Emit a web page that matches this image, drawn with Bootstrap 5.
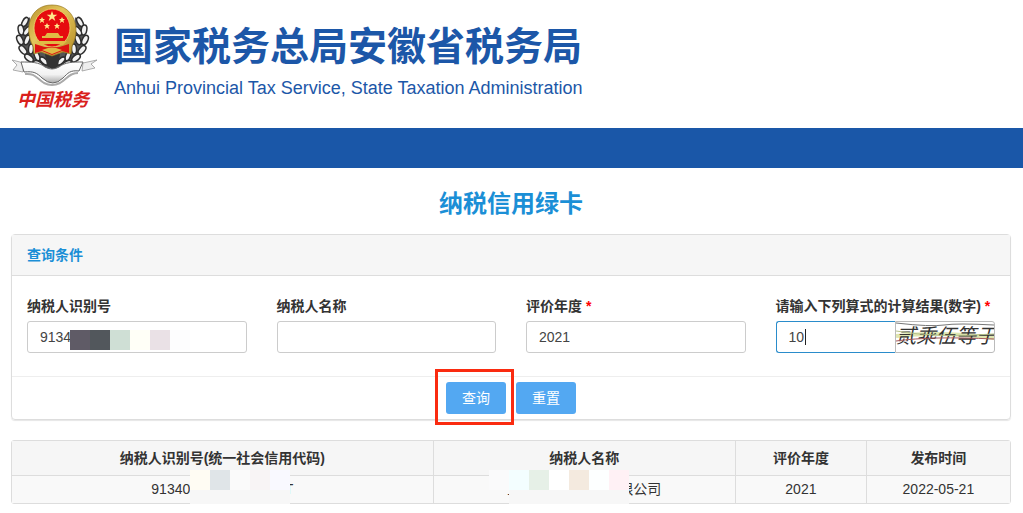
<!DOCTYPE html>
<html lang="zh-CN">
<head>
<meta charset="utf-8">
<meta name="viewport" content="width=device-width, initial-scale=1">
<title>纳税信用绿卡</title>
<link href="https://cdn.jsdelivr.net/npm/bootstrap@5.3.0/dist/css/bootstrap.min.css" rel="stylesheet">
<style>
body{font:14px/20px "Liberation Sans","Noto Sans CJK SC",sans-serif;color:#333;background:#fff}
.site-head{height:128px;color:#1c57a8}
.emblem{width:104px;height:116px}
.org-name{font-size:39px;line-height:48px;font-weight:700;white-space:nowrap}
.org-en{font-size:18px;line-height:26px;white-space:nowrap}
.head-text{padding:23px 0 0 10px}
.blue-bar{height:40px;background:#1a57a8}
.page-title{font-size:24px;line-height:32px;font-weight:700;color:#1b8fd6;margin-bottom:14px}
.main-area{padding:20px 12px 0 11px}
.query-card{border:1px solid #ddd;border-radius:4px;box-shadow:0 1px 1px rgba(0,0,0,.1)}
.query-head{background:#f6f6f6;border-bottom:1px solid #ddd;padding:10px 15px;color:#1b8fd6;font-weight:700}
.query-col{padding:20px 15px 23px}
.query-col label{font-weight:700;margin-bottom:5px;white-space:nowrap;display:block}
.query-col .form-control{height:32px;font-size:14px;line-height:20px;padding:5px 12px;border:1px solid #ccc;border-radius:3px;color:#444}
.query-col .active-box{border-color:#2a8ccb;border-radius:3px 0 0 3px;border-right:0}
.req{color:#f00}
.caret{left:29px;top:8px;width:1px;height:16px;background:#222}
.captcha{width:100px;height:32px;border:1px solid #bbb;border-radius:0 3px 3px 0}
.query-foot{border-top:1px solid #eee;padding:5px 0;gap:10px}
.btn-act{width:60px;height:32px;padding:0;font-size:14px;line-height:20px;color:#fff;background:#53a8f2;border:0;border-radius:3px}
.marked::after{content:"";position:absolute;inset:-13px -8px -11px -11px;border:3px solid #fa2b10;pointer-events:none}
.tile{width:20px;height:20px}
.over{position:absolute;display:flex}
.over-input{left:43px;top:9px}
.result-box{margin-top:20px;border:1px solid #ddd;border-radius:3px}
.result-box table{table-layout:fixed;width:100%;margin:0;text-align:center;background:#f9f9f9}
.result-box th{height:34px;padding:0;background:#f6f6f6;border-bottom:1px solid #ddd;text-align:center}
.result-box td{height:28px;padding:0}
.result-box th+th,.result-box td+td{border-left:1px solid #ddd}
.masked{position:relative;display:inline-block;text-align:left}
.mask-code{width:142px}.mask-name{width:154px}
.over-code{left:39px;top:-9px;width:100px;height:40px;background:#f7f7f7}
.over-name{left:-18px;top:-9px}
.over-name::after{content:"";position:absolute;left:20px;top:20px;right:0;height:20px;background:#f7f7f7}
</style>
</head>
<body>
<header class="site-head d-flex">
<svg class="emblem flex-shrink-0" viewBox="0 0 104 116" role="img" aria-label="中国税务">
<defs><linearGradient id="silver" x2="0" y2="1"><stop stop-color="#fff"/><stop offset=".6" stop-color="#f2f2f2"/><stop offset="1" stop-color="#aaa"/></linearGradient>
<linearGradient id="gold" x2="1" y2="1"><stop stop-color="#b8902c"/><stop offset=".4" stop-color="#e3c75c"/><stop offset="1" stop-color="#b58b24"/></linearGradient>
<g id="ear" fill="#f2f2f2" stroke="#2e2e2e" stroke-width="1.5">
<path d="M30 17C16 30 14 52 36 66l14 4-2-18-16-8z" fill="#555" stroke="none"/>
<ellipse cx="25" cy="22" rx="2.500" ry="5" transform="rotate(30 25 22)"/><ellipse cx="21" cy="30" rx="2.800" ry="5" transform="rotate(-10 21 30)"/><ellipse cx="27" cy="31" rx="2.500" ry="5" transform="rotate(35 27 31)"/><ellipse cx="20" cy="40" rx="2.800" ry="5" transform="rotate(-25 20 40)"/><ellipse cx="27" cy="40" rx="2.500" ry="5" transform="rotate(20 27 40)"/><ellipse cx="23" cy="50" rx="2.800" ry="5" transform="rotate(-40 23 50)"/><ellipse cx="31" cy="49" rx="2.500" ry="5" transform="rotate(5 31 49)"/><ellipse cx="29" cy="58" rx="2.800" ry="5" transform="rotate(-50 29 58)"/><ellipse cx="37" cy="56" rx="2.500" ry="5" transform="rotate(-20 37 56)"/><ellipse cx="38" cy="64" rx="2.800" ry="5" transform="rotate(-65 38 64)"/><ellipse cx="44" cy="61" rx="2.500" ry="5" transform="rotate(-45 44 61)"/></g></defs>
<use href="#ear"/><use href="#ear" transform="matrix(-1 0 0 1 105 0)"/>
<path d="M45 54h15l-2 12-5 4-6-4z" fill="#333"/>
<path d="M33 46C24 30 29 5 52 5s29 25 20 41l-1 8-8-2-11 4-11-4-7 2z" fill="url(#gold)" stroke="#97771e" stroke-width=".7"/>
<ellipse cx="52" cy="28" rx="18" ry="19" fill="#e60b0f" stroke="#eed66b" stroke-width=".8"/>
<path d="M35 44q17 7 34 0v9l-7-2-10 4-10-4-7 2z" fill="#dc1411"/>
<path d="M45 36l2-3h11l2 3h3v2H42v-2zM37 41h30l-4 4-6-1h-9l-7 1zM42 50l6-2h8l6 2-10 4z" fill="#e0bb45"/>
<path d="M52 11l1.300 3.700h4l-3.200 2.400 1.200 3.900-3.300-2.400-3.300 2.400 1.200-3.900-3.200-2.400h4z" fill="#ffe98a"/>
<g fill="#ffe98a"><path d="M42 17l1 2h2l-1.600 1.500.6 2.500-2-1.500-2 1.500.6-2.500L39 19h2zM62 17l1 2h2l-1.600 1.500.6 2.500-2-1.500-2 1.500.6-2.500L59 19h2zM47 23l1 2h2l-1.600 1.500.6 2.500-2-1.500-2 1.500.6-2.500L44 25h2zM57 23l1 2h2l-1.600 1.500.6 2.500-2-1.500-2 1.500.6-2.500L54 25h2z"/></g>
<path d="M12 60l12 3-1 9-10-2 4-5zM97 60l-14 3-1 8 13-3-4-4z" fill="#eee" stroke="#999" stroke-width=".8"/>
<path d="M21 62c10 0 18 0 24 5q7 4 14 0c6-5 14-5 24-5l-4 9c-9-1-11 2-16 7q-10 10-21 0c-5-5-8-7-18-6z" fill="url(#silver)" stroke="#666"/>
<path d="M25 74c10-1 11 4 19 9q8 4 16 0c7-4 9-10 18-10" fill="none" stroke="#aaa" stroke-width="2"/>
<text x="17" y="106" font-size="18" font-weight="700" font-style="italic" fill="#d9201c" font-family="Noto Sans CJK SC, sans-serif">中国税务</text>
</svg>
<div class="head-text">
<div class="org-name">国家税务总局安徽省税务局</div>
<div class="org-en mt-1">Anhui Provincial Tax Service, State Taxation Administration</div>
</div>
</header>
<div class="blue-bar"></div>
<main class="main-area">
<h1 class="page-title text-center">纳税信用绿卡</h1>
<form class="query-card" onsubmit="return false">
<div class="query-head">查询条件</div>
<div class="row g-0">
<div class="col-3 query-col"><label for="code">纳税人识别号</label><div class="position-relative"><input id="code" class="form-control" value="9134"><div class="over over-input"><i class="tile" style="background:#5f5b66"></i><i class="tile" style="background:#52575c"></i><i class="tile" style="background:#cfdfd5"></i><i class="tile" style="background:#fffff7"></i><i class="tile" style="background:#eae1e6"></i><i class="tile" style="background:#fdfdfe"></i></div></div></div>
<div class="col-3 query-col"><label for="tname">纳税人名称</label><input id="tname" class="form-control"></div>
<div class="col-3 query-col"><label for="year">评价年度 <span class="req">*</span></label><input id="year" class="form-control" value="2021"></div>
<div class="col-3 query-col"><label for="answer">请输入下列算式的计算结果(数字) <span class="req">*</span></label>
<div class="d-flex position-relative"><input id="answer" class="form-control active-box" value="10"><span class="caret position-absolute"></span>
<svg class="captcha flex-shrink-0" viewBox="0 0 98 30" role="img" aria-label="贰乘伍等于"><path d="M0 14q45-5 98 2" fill="none" stroke="#dfe6b0" stroke-width="4"/><text x="0" y="21" font-size="20" font-style="italic" fill="#333" font-family="Noto Sans CJK SC, sans-serif">贰乘伍等于</text><path d="M0 1q35 4 48 2t50 0" fill="none" stroke="#777"/><path d="M0 19q35-5 98-2" fill="none" stroke="#a4575b"/><path d="M0 9q40 7 98 3" fill="none" stroke="#b5c08a"/></svg></div></div>
</div>
<div class="query-foot d-flex justify-content-center"><span class="marked position-relative d-flex"><button class="btn btn-act" type="submit">查询</button></span><button class="btn btn-act" type="reset">重置</button></div>
</form>
<div class="result-box">
<table>
<colgroup><col style="width:42.2%"><col style="width:30.3%"><col style="width:13.1%"><col style="width:14.4%"></colgroup>
<thead><tr><th>纳税人识别号(统一社会信用代码)</th><th>纳税人名称</th><th>评价年度</th><th>发布时间</th></tr></thead>
<tbody><tr>
<td><div class="masked mask-code d-inline-flex justify-content-between"><span>91340</span><span>T</span><div class="over over-code"><i class="tile" style="background:#fffcf3"></i><i class="tile" style="background:#e0e5e8"></i><i class="tile" style="background:#fafafa"></i><i class="tile" style="background:#f8f4f5"></i><i class="tile" style="background:#f9f9ff"></i></div></div></td>
<td><div class="masked mask-name d-inline-flex justify-content-between"><span>上</span><span>限公司</span><div class="over over-name"><i class="tile" style="background:#fafafb"></i><i class="tile" style="background:#f3feff"></i><i class="tile" style="background:#e6f0e7"></i><i class="tile" style="background:#fff"></i><i class="tile" style="background:#f4eadf"></i><i class="tile" style="background:#fdffff"></i><i class="tile" style="background:#fff1f5"></i></div></div></td>
<td>2021</td><td>2022-05-21</td></tr></tbody>
</table>
</div>
</main>
<script src="https://cdn.jsdelivr.net/npm/bootstrap@5.3.0/dist/js/bootstrap.bundle.min.js"></script>
</body>
</html>
